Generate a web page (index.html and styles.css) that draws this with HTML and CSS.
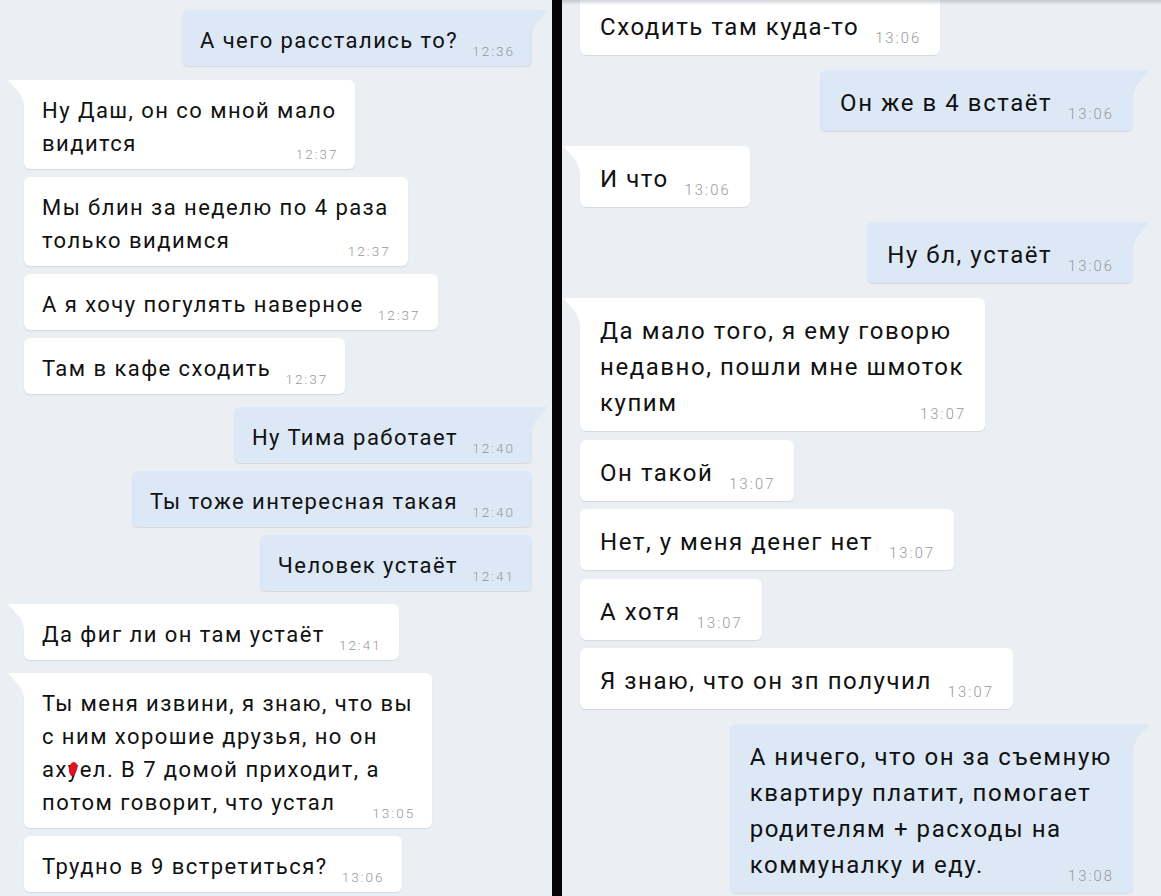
FILE: index.html
```html
<!DOCTYPE html>
<html lang="ru">
<head>
<meta charset="utf-8">
<title>Переписка</title>
<link rel="stylesheet" href="styles.css">
</head>
<body>
<div class="screen">
  <section class="chat chat-a">
    <div class="msg out tail"><span class="text">А чего расстались то?</span><span class="time">12:36</span></div>
    <div class="msg in tail"><span class="text">Ну Даш, он со мной мало<br>видится</span><span class="time">12:37</span></div>
    <div class="msg in"><span class="text">Мы блин за неделю по 4 раза<br>только видимся</span><span class="time">12:37</span></div>
    <div class="msg in"><span class="text">А я хочу погулять наверное</span><span class="time">12:37</span></div>
    <div class="msg in"><span class="text">Там в кафе сходить</span><span class="time">12:37</span></div>
    <div class="msg out tail"><span class="text">Ну Тима работает</span><span class="time">12:40</span></div>
    <div class="msg out"><span class="text">Ты тоже интересная такая</span><span class="time">12:40</span></div>
    <div class="msg out"><span class="text">Человек устаёт</span><span class="time">12:41</span></div>
    <div class="msg in tail"><span class="text">Да фиг ли он там устаёт</span><span class="time">12:41</span></div>
    <div class="msg in tail"><span class="text">Ты меня извини, я знаю, что вы<br>с ним хорошие друзья, но он<br>ах<span class="censor">у</span>ел. В 7 домой приходит, а<br>потом говорит, что устал</span><span class="time">13:05</span></div>
    <div class="msg in"><span class="text">Трудно в 9 встретиться?</span><span class="time">13:06</span></div>
  </section>
  <div class="divider"></div>
  <section class="chat chat-b">
    <div class="msg in first"><span class="text">Сходить там куда-то</span><span class="time">13:06</span></div>
    <div class="msg out tail"><span class="text">Он же в 4 встаёт</span><span class="time">13:06</span></div>
    <div class="msg in tail"><span class="text">И что</span><span class="time">13:06</span></div>
    <div class="msg out tail"><span class="text">Ну бл, устаёт</span><span class="time">13:06</span></div>
    <div class="msg in tail"><span class="text">Да мало того, я ему говорю<br>недавно, пошли мне шмоток<br>купим</span><span class="time">13:07</span></div>
    <div class="msg in"><span class="text">Он такой</span><span class="time">13:07</span></div>
    <div class="msg in"><span class="text">Нет, у меня денег нет</span><span class="time">13:07</span></div>
    <div class="msg in"><span class="text">А хотя</span><span class="time">13:07</span></div>
    <div class="msg in"><span class="text">Я знаю, что он зп получил</span><span class="time">13:07</span></div>
    <div class="msg out tail"><span class="text">А ничего, что он за съемную<br>квартиру платит, помогает<br>родителям + расходы на<br>коммуналку и еду.</span><span class="time">13:08</span></div>
  </section>
</div>
</body>
</html>
```

FILE: styles.css
```css
html, body {
  margin: 0;
  padding: 0;
}
body {
  background: #ebeef2;
  font-family: Roboto, "Noto Sans", "Liberation Sans", sans-serif;
  color: #111111;
}
.screen {
  display: flex;
  width: 1161px;
  height: 896px;
  overflow: hidden;
}
.chat {
  display: flex;
  flex-direction: column;
  align-items: flex-start;
  box-sizing: border-box;
  background: #ebeef2;
}
.chat-a {
  width: 552px;
  padding: 10px 20px 0 24px;
  font-size: 22px;
  line-height: 33px;
  letter-spacing: 1.45px;
  --pt: 14px;
  --pb: 9px;
  --pl: 18px;
  --pr: 19px;
  --gap: 8px;
  --group: 13px;
  --tail-w: 16px;
  --tail-h: 24px;
  --time-size: 13.5px;
  --time-ls: 2px;
  --spacer: 55px;
}
.chat-a > .msg:nth-child(2) {
  margin-top: 14px;
}
.chat-b {
  position: relative;
  flex: 1;
  padding: 0 28px 0 18px;
  font-size: 24px;
  line-height: 36px;
  letter-spacing: 1.55px;
  --pt: 15px;
  --pb: 10px;
  --pl: 20px;
  --pr: 21px;
  --gap: 8.5px;
  --group: 15px;
  --tail-w: 17px;
  --tail-h: 26px;
  --time-size: 14.7px;
  --time-ls: 2.1px;
  --spacer: 60px;
}
.chat-b::after {
  content: "";
  position: absolute;
  left: 0;
  right: 0;
  top: 0;
  height: 5px;
  background: linear-gradient(rgba(120, 128, 140, 0.35), rgba(120, 128, 140, 0));
}
.divider {
  width: 10px;
  flex: none;
  background: #050505;
}
.msg {
  position: relative;
  display: grid;
  background: #ffffff;
  border-radius: 6px;
  padding: var(--pt) var(--pr) var(--pb) var(--pl);
  margin-top: var(--gap);
  box-shadow: 0 1px 1px rgba(60, 70, 90, 0.13);
}
.msg.out {
  align-self: flex-end;
  background: #dce8f6;
}
.msg.tail {
  margin-top: var(--group);
}
.chat > .msg:first-child {
  margin-top: 0;
}
.chat > .msg.first {
  margin-top: -6px;
}
.msg.in.tail {
  border-top-left-radius: 0;
}
.msg.out.tail {
  border-top-right-radius: 0;
}
.msg.tail::before {
  content: "";
  position: absolute;
  top: 0;
  width: var(--tail-w);
  height: var(--tail-h);
  background: inherit;
}
.msg.in.tail::before {
  left: calc(-1 * var(--tail-w));
  clip-path: polygon(0 0, 100% 0, 100% 100%, 80% 60%);
}
.msg.out.tail::before {
  right: calc(-1 * var(--tail-w));
  clip-path: polygon(0 0, 100% 0, 20% 60%, 0 100%);
}
.text,
.time {
  grid-area: 1 / 1;
}
.text {
  white-space: nowrap;
}
.text::after {
  content: "";
  display: inline-block;
  width: var(--spacer);
}
.time {
  justify-self: end;
  align-self: end;
  font-size: var(--time-size);
  line-height: var(--time-size);
  letter-spacing: var(--time-ls);
  margin-right: calc(-1 * var(--time-ls));
  margin-bottom: -1px;
  color: #95989c;
  font-weight: 300;
}
.censor {
  position: relative;
}
.censor::after {
  content: "";
  position: absolute;
  left: 1px;
  top: 5px;
  width: 8px;
  height: 14px;
  background: #e3141b;
  border-radius: 50% 50% 50% 50% / 40% 40% 60% 60%;
  transform: rotate(12deg);
}
```
